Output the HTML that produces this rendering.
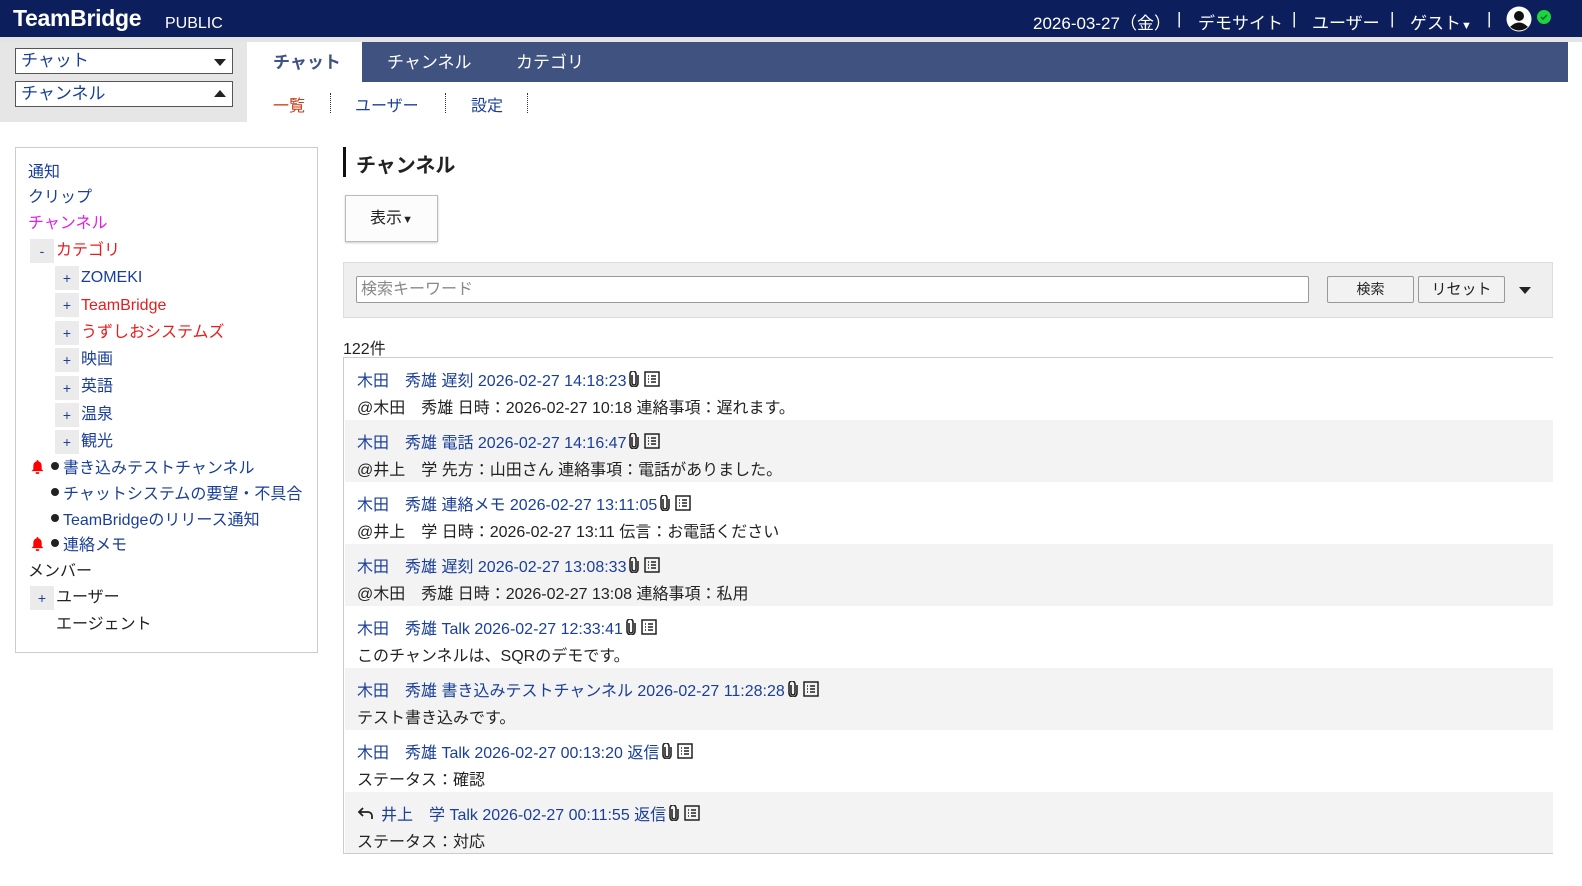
<!DOCTYPE html>
<html><head><meta charset="utf-8"><style>
*{box-sizing:border-box;margin:0;padding:0}
html,body{overflow:hidden}
body{width:1582px;height:886px;background:#fff;font-family:"Liberation Sans","Noto Sans CJK JP",sans-serif;font-size:16px;color:#222;position:relative}
.abs{position:absolute}
a{color:#1a3f9a;text-decoration:none}
#hdr{left:0;top:0;width:1582px;height:37px;background:#0c1f5c;color:#fff}
#hdr .h{position:absolute;top:9px;font-size:17px;white-space:nowrap}
#line{left:0;top:37px;width:1582px;height:5px;background:#e4e4e4}
#lp{left:0;top:42px;width:247px;height:80px;background:#e6e6e6}
.sel{position:absolute;left:15px;width:218px;height:26px;border:1px solid #555;background:#fff;color:#1a3f9a;font-size:17px;padding-left:5px;line-height:24px}
.sel i{position:absolute;right:6px;top:10px;width:0;height:0;border-left:6px solid transparent;border-right:6px solid transparent}
#tabs{left:247px;top:42px;width:1321px;height:40px;background:#3f5280}
.tab{position:absolute;top:0;height:40px;line-height:42px;color:#fff;font-size:17px}
.side{left:15px;top:147px;width:303px;height:506px;border:1px solid #ccc}
.it{position:absolute;font-size:16px;line-height:20px;white-space:nowrap}
.pm{position:absolute;width:24px;height:24px;background:#ebebeb;color:#1a3f9a;text-align:center;line-height:24px;font-size:14px}
.dot{position:absolute;width:8px;height:8px;border-radius:50%;background:#222}
.row{position:absolute;left:1px;width:1208px;height:62px}
.row .t{position:absolute;left:12px;top:9px;color:#1a3f9a;white-space:nowrap}
.row .b{position:absolute;left:12px;top:36px;white-space:nowrap}
.ic{display:inline-block;vertical-align:-1px;margin-left:3px}
</style></head><body>
<div id="hdr" class="abs">
<div class="abs" style="left:13px;top:5px;font-size:23px;font-weight:bold;letter-spacing:-0.3px">TeamBridge</div>
<div class="abs" style="left:165px;top:15px;font-size:16px">PUBLIC</div>
<div class="h" style="left:1033px">2026-03-27（金）</div>
<div class="h" style="left:1177px">|</div>
<div class="h" style="left:1198px">デモサイト</div>
<div class="h" style="left:1292px">|</div>
<div class="h" style="left:1312px">ユーザー</div>
<div class="h" style="left:1390px">|</div>
<div class="h" style="left:1410px">ゲスト<span style="font-size:11px">▼</span></div>
<div class="h" style="left:1487px">|</div>
<svg class="abs" style="left:1506px;top:6px" width="26" height="26" viewBox="0 0 26 26"><circle cx="13" cy="13" r="12.5" fill="#fff"/><circle cx="13" cy="10" r="5" fill="#111"/><path d="M4 21 Q13 12 22 21 Q13 28 4 21Z" fill="#111"/></svg>
<svg class="abs" style="left:1537px;top:10px" width="14" height="14"><circle cx="7" cy="7" r="7" fill="#1ed43c"/><path d="M4 7l2 2 4-4" stroke="#063" stroke-width="1.5" fill="none"/></svg>
</div>
<div id="line" class="abs"></div>
<div id="lp" class="abs">
<div class="sel" style="top:6px">チャット<i style="border-top:7px solid #222"></i></div>
<div class="sel" style="top:39px">チャンネル<i style="border-bottom:7px solid #222;top:8px"></i></div>
</div>
<div id="tabs" class="abs">
<div class="tab" style="left:0;width:115px;background:#fff;color:#3f5280;font-weight:bold;padding-left:26px">チャット</div>
<div class="tab" style="left:140px">チャンネル</div>
<div class="tab" style="left:269px">カテゴリ</div>
</div>
<div class="abs" style="left:273px;top:92px;color:#c63a12;font-size:16px">一覧</div>
<div class="abs" style="left:330px;top:93px;height:20px;border-left:1px dotted #333"></div>
<div class="abs" style="left:355px;top:92px;color:#1a3f9a">ユーザー</div>
<div class="abs" style="left:445px;top:93px;height:20px;border-left:1px dotted #333"></div>
<div class="abs" style="left:471px;top:92px;color:#1a3f9a">設定</div>
<div class="abs" style="left:527px;top:93px;height:20px;border-left:1px dotted #333"></div>

<svg width="0" height="0" style="position:absolute"><defs>
<symbol id="bell" viewBox="0 0 14 16"><path d="M7 1a1 1 0 0 1 1 1v.5A4.5 4.5 0 0 1 11.5 7v4l2 2H.5l2-2V7A4.5 4.5 0 0 1 6 2.5V2a1 1 0 0 1 1-1z" fill="#f00"/><rect x="5" y="14" width="4" height="2" rx="1" fill="#f00"/></symbol>
<symbol id="cl" viewBox="0 0 10 16"><path d="M3 4v8a2 2 0 0 0 4 0V3a3 3 0 0 0-6 0v9a4 4 0 0 0 8 0V4" fill="none" stroke="#222" stroke-width="1.6"/></symbol>
<symbol id="ls" viewBox="0 0 16 16"><rect x="1" y="1" width="14" height="14" fill="none" stroke="#222" stroke-width="1.5"/><path d="M4 5h1M7 5h5M4 8h1M7 8h5M4 11h1M7 11h5" stroke="#222" stroke-width="1.5"/></symbol>
</defs></svg>

<div class="side abs">
<div class="it" style="left:12px;top:15px"><a>通知</a></div>
<div class="it" style="left:12px;top:40px"><a>クリップ</a></div>
<div class="it" style="left:12px;top:66px;color:#e61ee6">チャンネル</div>
<div class="pm" style="left:14px;top:91px">-</div><div class="it" style="left:40px;top:93px;color:#e81c1c">カテゴリ</div>
<div class="pm" style="left:39px;top:118px">+</div><div class="it" style="left:65px;top:120px"><a>ZOMEKI</a></div>
<div class="pm" style="left:39px;top:145px">+</div><div class="it" style="left:65px;top:148px;color:#e81c1c">TeamBridge</div>
<div class="pm" style="left:39px;top:173px">+</div><div class="it" style="left:65px;top:175px;color:#e81c1c">うずしおシステムズ</div>
<div class="pm" style="left:39px;top:200px">+</div><div class="it" style="left:65px;top:202px"><a>映画</a></div>
<div class="pm" style="left:39px;top:228px">+</div><div class="it" style="left:65px;top:229px"><a>英語</a></div>
<div class="pm" style="left:39px;top:255px">+</div><div class="it" style="left:65px;top:257px"><a>温泉</a></div>
<div class="pm" style="left:39px;top:282px">+</div><div class="it" style="left:65px;top:284px"><a>観光</a></div>
<svg class="abs" style="left:15px;top:311px" width="13" height="15"><use href="#bell"/></svg>
<div class="dot" style="left:35px;top:314px"></div><div class="it" style="left:47px;top:311px"><a>書き込みテストチャンネル</a></div>
<div class="dot" style="left:35px;top:340px"></div><div class="it" style="left:47px;top:337px"><a>チャットシステムの要望・不具合</a></div>
<div class="dot" style="left:35px;top:366px"></div><div class="it" style="left:47px;top:363px"><a>TeamBridgeのリリース通知</a></div>
<svg class="abs" style="left:15px;top:388px" width="13" height="15"><use href="#bell"/></svg>
<div class="dot" style="left:35px;top:391px"></div><div class="it" style="left:47px;top:388px"><a>連絡メモ</a></div>
<div class="it" style="left:12px;top:414px">メンバー</div>
<div class="pm" style="left:14px;top:438px">+</div><div class="it" style="left:40px;top:440px">ユーザー</div>
<div class="it" style="left:40px;top:467px">エージェント</div>
</div>

<div class="abs" style="left:343px;top:147px;height:30px;border-left:3px solid #111"></div>
<div class="abs" style="left:356px;top:149px;font-size:20px;font-weight:bold">チャンネル</div>
<div class="abs" style="left:345px;top:195px;width:93px;height:47px;border:1px solid #bbb;background:#fcfcfc;box-shadow:0 1px 2px #ccc;text-align:center;line-height:45px">表示<span style="font-size:11px">▼</span></div>

<div class="abs" style="left:343px;top:262px;width:1210px;height:56px;background:#efefef;border:1px solid #ddd"></div>
<div class="abs" style="left:356px;top:276px;width:953px;height:27px;border:1px solid #999;border-radius:2px;background:#fff;color:#888;padding-left:4px;line-height:25px">検索キーワード</div>
<div class="abs" style="left:1327px;top:276px;width:87px;height:27px;border:1px solid #999;border-radius:2px;background:#f2f2f2;text-align:center;line-height:25px;font-size:14px">検索</div>
<div class="abs" style="left:1418px;top:276px;width:87px;height:27px;border:1px solid #999;border-radius:2px;background:#f2f2f2;text-align:center;line-height:25px;font-size:15px">リセット</div>
<div class="abs" style="left:1519px;top:287px;border-left:6px solid transparent;border-right:6px solid transparent;border-top:7px solid #222"></div>

<div class="abs" style="left:343px;top:335px">122件</div>
<div class="abs" style="left:343px;top:357px;width:1210px;height:497px;border:1px solid #ccc">
<div class="row" style="top:0;background:#fff"><div class="t">木田　秀雄 遅刻 2026-02-27 14:18:23<svg class="ic" width="10" height="16"><use href="#cl"/></svg><svg class="ic" width="16" height="16" style="margin-left:5px"><use href="#ls"/></svg></div><div class="b">@木田　秀雄 日時：2026-02-27 10:18 連絡事項：遅れます。</div></div>
<div class="row" style="top:62px;background:#f3f3f3"><div class="t">木田　秀雄 電話 2026-02-27 14:16:47<svg class="ic" width="10" height="16"><use href="#cl"/></svg><svg class="ic" width="16" height="16" style="margin-left:5px"><use href="#ls"/></svg></div><div class="b">@井上　学 先方：山田さん 連絡事項：電話がありました。</div></div>
<div class="row" style="top:124px;background:#fff"><div class="t">木田　秀雄 連絡メモ 2026-02-27 13:11:05<svg class="ic" width="10" height="16"><use href="#cl"/></svg><svg class="ic" width="16" height="16" style="margin-left:5px"><use href="#ls"/></svg></div><div class="b">@井上　学 日時：2026-02-27 13:11 伝言：お電話ください</div></div>
<div class="row" style="top:186px;background:#f3f3f3"><div class="t">木田　秀雄 遅刻 2026-02-27 13:08:33<svg class="ic" width="10" height="16"><use href="#cl"/></svg><svg class="ic" width="16" height="16" style="margin-left:5px"><use href="#ls"/></svg></div><div class="b">@木田　秀雄 日時：2026-02-27 13:08 連絡事項：私用</div></div>
<div class="row" style="top:248px;background:#fff"><div class="t">木田　秀雄 Talk 2026-02-27 12:33:41<svg class="ic" width="10" height="16"><use href="#cl"/></svg><svg class="ic" width="16" height="16" style="margin-left:5px"><use href="#ls"/></svg></div><div class="b">このチャンネルは、SQRのデモです。</div></div>
<div class="row" style="top:310px;background:#f3f3f3"><div class="t">木田　秀雄 書き込みテストチャンネル 2026-02-27 11:28:28<svg class="ic" width="10" height="16"><use href="#cl"/></svg><svg class="ic" width="16" height="16" style="margin-left:5px"><use href="#ls"/></svg></div><div class="b">テスト書き込みです。</div></div>
<div class="row" style="top:372px;background:#fff"><div class="t">木田　秀雄 Talk 2026-02-27 00:13:20 返信<svg class="ic" width="10" height="16"><use href="#cl"/></svg><svg class="ic" width="16" height="16" style="margin-left:5px"><use href="#ls"/></svg></div><div class="b">ステータス：確認</div></div>
<div class="row" style="top:434px;background:#f3f3f3;height:61px"><div class="t"><svg width="18" height="14" viewBox="0 0 18 14" style="vertical-align:0;margin-right:6px"><path d="M6 2L2 6l4 4M2 6h9a4 4 0 0 1 4 4v3" fill="none" stroke="#222" stroke-width="1.8"/></svg>井上　学 Talk 2026-02-27 00:11:55 返信<svg class="ic" width="10" height="16"><use href="#cl"/></svg><svg class="ic" width="16" height="16" style="margin-left:5px"><use href="#ls"/></svg></div><div class="b">ステータス：対応</div></div>
</div>
</body></html>
